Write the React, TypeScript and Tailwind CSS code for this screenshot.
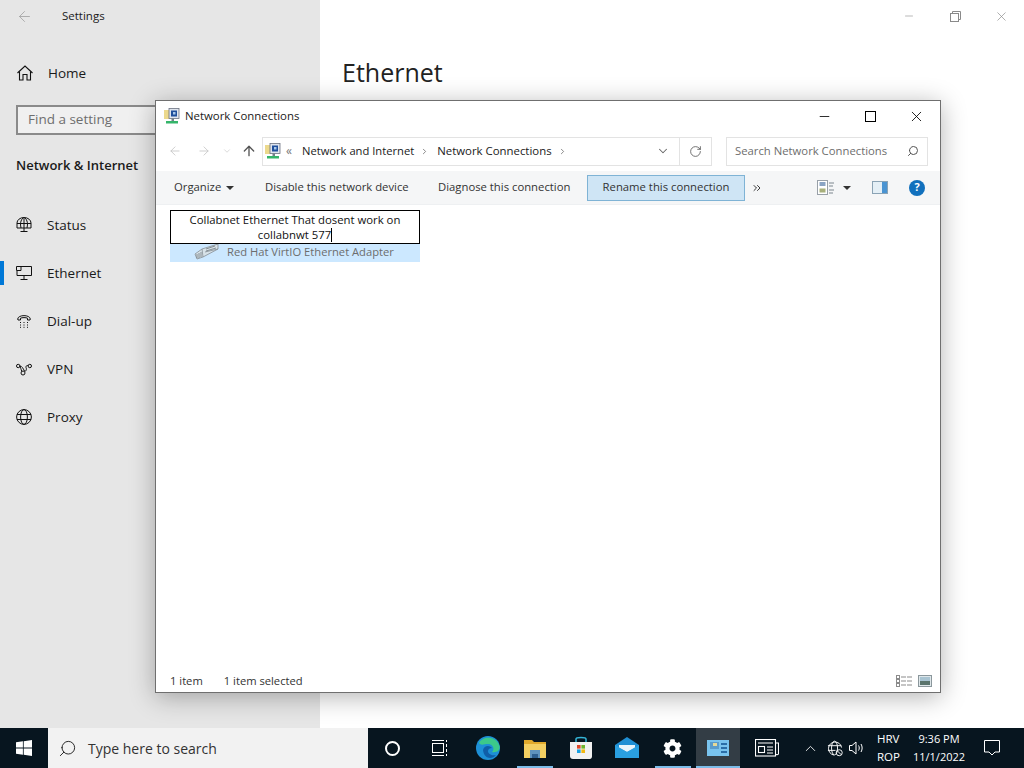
import { ArrowLeft, ArrowRight, ArrowUp, ChevronDown, ChevronRight, ChevronUp, ChevronsRight, Minus, RotateCw, Search, X } from 'lucide-react';
import { FaCog } from 'react-icons/fa';
import type { ReactNode } from 'react';

const nav = [
  { label: 'Status', icon: <StatusIcon /> },
  { label: 'Ethernet', icon: <EthernetIcon />, active: true },
  { label: 'Dial-up', icon: <DialIcon /> },
  { label: 'VPN', icon: <VpnIcon /> },
  { label: 'Proxy', icon: <GlobeIcon /> },
];

function HomeIcon() {
  return (
    <svg width="16" height="16" viewBox="0 0 16 16" fill="none" stroke="#111" strokeWidth="1.1">
      <path d="M0.5 8 L8 1 L15.5 8" />
      <path d="M2.5 6.5 V15 H6 V9.5 H10 V15 H13.5 V6.5" />
    </svg>
  );
}

function StatusIcon() {
  return (
    <svg width="16" height="16" viewBox="0 0 16 16" fill="none" stroke="#111" strokeWidth="1">
      <path d="M1 11 V6 A7 5.5 0 0 1 15 6 V11 Z" />
      <path d="M1 6.5 H15 M8 0.5 V11 M5 11 C4 7 4.5 3 7 1 M11 11 C12 7 11.5 3 9 1" />
      <path d="M8 11 V14 M4.5 14.5 H11.5" />
    </svg>
  );
}

function EthernetIcon() {
  return (
    <svg width="16" height="14" viewBox="0 0 16 14" fill="none" stroke="#111" strokeWidth="1">
      <path d="M4 .5 H15.5 V9.5 H1 V5" />
      <path d="M.5 .5 H5 V4.5 H.5 Z" />
      <path d="M8 9.5 V13 M4.5 13.5 H11.5" />
    </svg>
  );
}

function DialIcon() {
  return (
    <svg width="14" height="14" viewBox="0 0 14 14" fill="none" stroke="#111" strokeWidth="1">
      <path d="M.7 5 C1 .5 13 .5 13.3 5 L13 6 H10.5 V4.2 C9 3.4 5 3.4 3.5 4.2 V6 H1 Z" />
      <path d="M3 8.5 H4 M6.5 8.5 H7.5 M10 8.5 H11 M3 11 H4 M6.5 11 H7.5 M10 11 H11 M6.5 13.3 H7.5 M3 13.3 H4 M10 13.3 H11" />
    </svg>
  );
}

function VpnIcon() {
  return (
    <svg width="16" height="13" viewBox="0 0 16 13" fill="none" stroke="#111" strokeWidth="1">
      <circle cx="2.2" cy="3" r="1.7" />
      <circle cx="13.8" cy="3" r="1.7" />
      <circle cx="7" cy="10" r="2" />
      <path d="M3.9 3 C6 3 7 5.5 8.5 8 C10 9 11 6 10 4.5 C9.7 3 11 2 12.1 2.7 M5.8 8.5 C5 6 4.5 4.5 3.9 3" />
    </svg>
  );
}

function GlobeIcon() {
  return (
    <svg width="16" height="16" viewBox="0 0 16 16" fill="none" stroke="#111" strokeWidth="1">
      <circle cx="8" cy="8" r="7.4" />
      <ellipse cx="8" cy="8" rx="3.4" ry="7.4" />
      <path d="M1 5.5 H15 M1 10.5 H15" />
    </svg>
  );
}

function NetFolderIcon() {
  return (
    <svg width="16" height="16" viewBox="0 0 16 16">
      <rect x="0" y="2" width="6" height="9" fill="#ecd98c" />
      <rect x="5" y="0.5" width="10" height="10" fill="#dfe5ee" stroke="#6b7280" strokeWidth="0.8" />
      <rect x="7" y="2.5" width="6" height="6" fill="#1f4f9c" />
      <rect x="9" y="4" width="2.5" height="2.5" fill="#a8c8ea" />
      <rect x="7.5" y="10.5" width="2.5" height="2.5" fill="#75808a" />
      <rect x="2" y="13" width="12" height="2.5" fill="#35b56a" />
    </svg>
  );
}

function AdapterIcon() {
  return (
    <svg width="25" height="16" viewBox="0 0 25 16" fill="none">
      <path d="M1 10 L8 5 L24 0 L24 5 L9 13 L3 15 Z" fill="#d7e2e8" stroke="#858e94" strokeWidth="0.8" />
      <path d="M8 5 L9 13 M24 5 L11 8" stroke="#858e94" strokeWidth="0.8" />
      <path d="M3 10 V14 M5 9 V14 M7 8 V13 M12 5 L21 2 M12 7 L22 4" stroke="#70797f" strokeWidth="0.8" />
    </svg>
  );
}

function ViewIcon() {
  return (
    <svg width="17" height="15" viewBox="0 0 17 15">
      <rect x="0.5" y="0.5" width="10" height="14" fill="#fff" stroke="#98a0a8" />
      <rect x="2.5" y="2" width="6" height="4" fill="#8aa4c4" />
      <rect x="2.5" y="8.5" width="6" height="4" fill="#a8b07c" />
      <path d="M12 3 H17 M12 6 H16 M12 10 H17 M12 13 H16" stroke="#7d868e" />
    </svg>
  );
}

function PreviewPaneIcon() {
  return (
    <svg width="16" height="13" viewBox="0 0 16 13">
      <rect x="0.5" y="0.5" width="15" height="12" fill="#e4eff6" stroke="#8aa3b5" />
      <rect x="10" y="1" width="5" height="11" fill="#4a94d2" />
    </svg>
  );
}

function DetailsViewIcon() {
  return (
    <svg width="16" height="12" viewBox="0 0 16 12" fill="none" stroke="#8b8b8b">
      <rect x="0.5" y="0.5" width="3" height="3" />
      <rect x="0.5" y="4.5" width="3" height="3" />
      <rect x="0.5" y="8.5" width="3" height="3" />
      <path d="M5 2 H10 M11 2 H16 M5 6 H10 M11 6 H16 M5 10 H10 M11 10 H16" />
    </svg>
  );
}

function TilesViewIcon() {
  return (
    <svg width="14" height="12" viewBox="0 0 14 12">
      <rect x="0.5" y="0.5" width="13" height="11" fill="#dfe7ea" stroke="#8b979c" />
      <rect x="2" y="2" width="10" height="4" fill="#a9c4d2" />
      <rect x="2" y="6" width="10" height="4" fill="#5a746c" />
    </svg>
  );
}

function WindowsLogo() {
  return (
    <svg width="16" height="16" viewBox="0 0 16 16" fill="#fff">
      <path d="M0 2.3 L6.9 1.3 V7.5 H0 Z M7.7 1.2 L16 0 V7.5 H7.7 Z M0 8.4 H6.9 V14.7 L0 13.7 Z M7.7 8.4 H16 V16 L7.7 14.8 Z" />
    </svg>
  );
}

function TaskViewIcon() {
  return (
    <svg width="17" height="16" viewBox="0 0 17 16" fill="none" stroke="#fff" strokeWidth="1">
      <path d="M1 .5 H13 M1 15.5 H13" />
      <rect x="1.5" y="3.5" width="11" height="9" />
      <path d="M15.5 0 V2 M15.5 4 V7 M15.5 9 V12 M15.5 14 V16" />
    </svg>
  );
}

function EdgeIcon() {
  return (
    <svg width="24" height="24" viewBox="0 0 24 24">
      <circle cx="12" cy="12" r="12" fill="#1d8fd6" />
      <path d="M3 7 C6 0 20 -1 23.5 10 C24.5 15 20 17 16 16 C19 13 17 8 12 8 C8 8 5 10 3 7 Z" fill="#3cc98a" />
      <path d="M7 14 C8 9 14 9 16 12 C14 12 12 13 12 15 C12 18 16 20 20 19 C16 24 8 23 7 14 Z" fill="#0f5ea8" />
    </svg>
  );
}

function ExplorerIcon() {
  return (
    <svg width="22" height="19" viewBox="0 0 22 19">
      <path d="M0 1 H8 L10 3 H22 V8 H0 Z" fill="#e0a92c" />
      <rect x="0" y="5" width="22" height="14" fill="#f3cf62" />
      <rect x="6" y="11" width="10" height="8" fill="#5f93bd" />
      <rect x="8" y="15" width="6" height="4" fill="#2e5f8f" />
    </svg>
  );
}

function StoreIcon() {
  return (
    <svg width="24" height="24" viewBox="0 0 24 24">
      <path d="M7 6 V3 C7 1 17 1 17 3 V6" fill="none" stroke="#35b6d8" strokeWidth="1.5" />
      <path d="M1 6 H23 V20 C23 23 21 23 20 23 H4 C2 23 1 22 1 20 Z" fill="#f2f2f2" />
      <rect x="8" y="9" width="3.6" height="3.6" fill="#e0492a" />
      <rect x="12.4" y="9" width="3.6" height="3.6" fill="#6fb52c" />
      <rect x="8" y="13.4" width="3.6" height="3.6" fill="#1ba1e2" />
      <rect x="12.4" y="13.4" width="3.6" height="3.6" fill="#f2b811" />
    </svg>
  );
}

function MailIcon() {
  return (
    <svg width="24" height="22" viewBox="0 0 24 22">
      <path d="M0 8 L12 0 L24 8 V21 H0 Z" fill="#1f8fd4" />
      <path d="M4 8 H20 V11 L12 15 L4 11 Z" fill="#e8f4fb" />
      <path d="M0 8 L12 15 L24 8 V21 H0 Z" fill="#2a9fe0" />
    </svg>
  );
}

function RunningNetIcon() {
  return (
    <svg width="22" height="16" viewBox="0 0 22 16">
      <rect x="0" y="0" width="22" height="16" fill="#79c3ee" />
      <rect x="3" y="2" width="9" height="7" fill="#5a9ccc" />
      <rect x="6" y="3" width="4" height="3" fill="#e5d998" />
      <rect x="14" y="3" width="6" height="2" fill="#2a6ea8" />
      <rect x="14" y="7" width="6" height="2" fill="#2a6ea8" />
      <rect x="14" y="11" width="6" height="2" fill="#2a6ea8" />
    </svg>
  );
}

function NewsIcon() {
  return (
    <svg width="24" height="18" viewBox="0 0 24 18" fill="none" stroke="#fff" strokeWidth="1.1">
      <rect x="0.5" y="0.5" width="20" height="16.5" />
      <path d="M20.5 4 H23.5 V15 A2 2 0 0 1 20.5 15" />
      <rect x="3.5" y="7.5" width="6" height="6" />
      <path d="M3 4 H18 M12 8 H18 M12 11 H18 M12 14 H18" />
    </svg>
  );
}

function NetworkTrayIcon() {
  return (
    <svg width="17" height="17" viewBox="0 0 17 17" fill="none" stroke="#fff" strokeWidth="1">
      <path d="M7.5 15.5 A7 7 0 1 1 15.5 7.5" />
      <ellipse cx="8" cy="8" rx="3.2" ry="7.3" />
      <path d="M1 5.5 H15 M1 10.5 H9" />
      <circle cx="13" cy="13" r="3.2" />
      <path d="M11 11 L15 15" />
    </svg>
  );
}

function VolumeIcon() {
  return (
    <svg width="16" height="14" viewBox="0 0 16 14" fill="none" stroke="#fff" strokeWidth="1">
      <path d="M.5 4.5 H3 L7 1 V13 L3 9.5 H.5 Z" />
      <path d="M9.5 4.5 C10.5 6 10.5 8 9.5 9.5 M12 3 C13.5 5.5 13.5 8.5 12 11" />
    </svg>
  );
}

function NotificationIcon() {
  return (
    <svg width="16" height="16" viewBox="0 0 16 16" fill="none" stroke="#fff" strokeWidth="1">
      <path d="M.5 .5 H15.5 V12 H11 L8 15 L5 12 H.5 Z" />
    </svg>
  );
}

function RestoreIcon() {
  return (
    <svg width="11" height="11" viewBox="0 0 11 11" fill="none" stroke="#8a8a8a" strokeWidth="1">
      <rect x="0.5" y="2.5" width="8" height="8" />
      <path d="M2.5 2.5 V.5 H10.5 V8.5 H8.5" />
    </svg>
  );
}

function TaskItem({ className, bar, children }: { className: string; bar?: string; children: ReactNode }) {
  return (
    <div className={`relative h-full flex items-center justify-center ${className}`}>
      {children}
      {bar && <div className={`absolute bottom-0 h-[2px] bg-[#7cbce8] ${bar}`} />}
    </div>
  );
}

export default function App() {
  return (
    <div className="relative w-[1024px] h-[768px] overflow-hidden flex flex-col bg-white font-['Open_Sans','Noto_Sans',sans-serif] text-[#1a1a1a]">
      {/* settings window behind */}
      <div className="flex-1 flex min-h-0">
        <aside className="w-[320px] bg-[#e6e6e6] flex flex-col">
          <div className="h-[32px] flex items-center pl-[16px]">
            <ArrowLeft size={17} strokeWidth={1.2} className="text-[#a3a3a3]" />
            <span className="ml-[29px] text-[11.5px]">Settings</span>
          </div>
          <div className="h-[48px] mt-[17px] flex items-center pl-[17px]">
            <HomeIcon />
            <span className="ml-[15px] text-[13.5px]">Home</span>
          </div>
          <div className="mx-[16px] mt-[8px] h-[30px] border-2 border-[#8a8a8a] bg-[#f0f0f0] flex items-center pl-[10px] pb-[1px]">
            <span className="text-[13.5px] text-[#6e6e6e]">Find a setting</span>
          </div>
          <div className="mt-[18px] pl-[16px] text-[13px] font-semibold leading-[24px]">Network &amp; Internet</div>
          <div className="mt-[24px] flex flex-col">
            {nav.map((item) => (
              <div key={item.label} className="relative h-[48px] flex items-center">
                {item.active && <div className="absolute left-0 top-[12px] w-[4px] h-[24px] bg-[#0078d7]" />}
                <div className="w-[47px] flex justify-center">{item.icon}</div>
                <span className="text-[13.5px]">{item.label}</span>
              </div>
            ))}
          </div>
        </aside>
        <main className="flex-1 flex flex-col">
          <div className="h-[32px] flex items-center justify-end text-[#8a8a8a]">
            <div className="w-[46px] flex justify-center"><Minus size={12} strokeWidth={1.2} /></div>
            <div className="w-[46px] flex justify-center"><RestoreIcon /></div>
            <div className="w-[46px] flex justify-center"><X size={15} strokeWidth={1.1} /></div>
          </div>
          <h1 className="ml-[22px] mt-[18px] text-[25px] leading-[44px] font-normal text-[#222]">Ethernet</h1>
        </main>
      </div>

      {/* network connections window */}
      <div className="absolute left-[155px] top-[100px] w-[786px] h-[593px] bg-white border border-[#6f6f6f] shadow-[0_4px_24px_rgba(0,0,0,0.3)] flex flex-col">
        <div className="h-[30px] shrink-0 flex items-center pl-[8px]">
          <NetFolderIcon />
          <span className="ml-[5px] text-[11.4px] flex-1">Network Connections</span>
          <div className="w-[46px] flex justify-center"><Minus size={15} strokeWidth={1.3} className="text-black" /></div>
          <div className="w-[46px] flex justify-center"><div className="w-[11px] h-[11px] border border-black" /></div>
          <div className="w-[46px] flex justify-center mr-[1px]"><X size={17} strokeWidth={1.2} className="text-black" /></div>
        </div>
        <div className="h-[40px] shrink-0 flex items-center">
          <div className="w-[106px] flex items-center pl-[12px] text-[#c4c4c4]">
            <ArrowLeft size={14} strokeWidth={1.4} />
            <ArrowRight size={14} strokeWidth={1.4} className="ml-[15px]" />
            <ChevronDown size={10} strokeWidth={1.5} className="ml-[11px]" />
            <ArrowUp size={16} strokeWidth={2} className="ml-[9px] text-[#555]" />
          </div>
          <div className="w-[450px] h-[29px] border border-[#e3e3e3] flex items-center">
            <div className="ml-[2px]"><NetFolderIcon /></div>
            <span className="ml-[5px] text-[12px] text-[#777] leading-none">«</span>
            <span className="ml-[10px] text-[11.2px]">Network and Internet</span>
            <ChevronRight size={9} strokeWidth={2} className="ml-[6px] text-[#666]" />
            <span className="ml-[8px] text-[11.4px]">Network Connections</span>
            <ChevronRight size={9} strokeWidth={2} className="ml-[6px] text-[#666]" />
            <div className="flex-1" />
            <ChevronDown size={14} strokeWidth={1.8} className="text-[#666] mr-[9px]" />
            <div className="w-[32px] h-full border-l border-[#e3e3e3] flex items-center justify-center">
              <RotateCw size={13} strokeWidth={1.5} className="text-[#555]" />
            </div>
          </div>
          <div className="ml-[14px] w-[202px] h-[29px] border border-[#e3e3e3] flex items-center pl-[8px] pr-[8px]">
            <span className="text-[11.3px] text-[#6d6d6d] flex-1">Search Network Connections</span>
            <Search size={12} strokeWidth={2} className="text-[#555] -scale-x-100" />
          </div>
        </div>
        <div className="h-[34px] shrink-0 bg-[#f5f6f7] flex items-center text-[11.3px] text-[#333] border-b border-[#eef0f2]">
          <span className="ml-[18px] w-[52px]">Organize</span>
          <div className="w-0 h-0 border-x-[4px] border-x-transparent border-t-[4px] border-t-[#333]" />
          <span className="ml-[31px] w-[173px]">Disable this network device</span>
          <span className="w-[149px]">Diagnose this connection</span>
          <div className="w-[158px] h-[26px] bg-[#cfe5f5] border border-[#7fb3d5] flex items-center justify-center">Rename this connection</div>
          <ChevronsRight size={12} strokeWidth={1.8} className="ml-[6px] text-[#222]" />
          <div className="ml-[54px]"><ViewIcon /></div>
          <div className="ml-[9px] w-0 h-0 border-x-[4px] border-x-transparent border-t-[4px] border-t-[#333]" />
          <div className="ml-[21px]"><PreviewPaneIcon /></div>
          <div className="ml-[21px] w-[16px] h-[16px] rounded-full bg-[#1170bd] text-white text-[11px] font-bold flex items-center justify-center">?</div>
        </div>
        <div className="flex-1 pl-[14px] pt-[5px] flex flex-col">
          <div className="relative z-10 w-[250px] h-[34px] border border-black bg-white flex flex-col items-center justify-center text-[11.35px] leading-[15px] text-[#111]">
            <span>Collabnet Ethernet That dosent work on</span>
            <span className="flex items-center">collabnwt 577<span className="w-px h-[14px] bg-black" /></span>
          </div>
          <div className="w-[250px] h-[18px] bg-[#cce8ff] flex items-center pl-[24px]">
            <div className="-mt-[3px]"><AdapterIcon /></div>
            <span className="ml-[8px] text-[11.2px] pb-[2px] text-[#6d6d6d]">Red Hat VirtIO Ethernet Adapter</span>
          </div>
        </div>
        <div className="h-[22px] shrink-0 flex items-center pl-[14px] pr-[8px] text-[11.2px] text-[#333]">
          <span>1 item</span>
          <span className="ml-[21px] flex-1">1 item selected</span>
          <DetailsViewIcon />
          <div className="ml-[6px]"><TilesViewIcon /></div>
        </div>
      </div>

      {/* taskbar */}
      <footer className="h-[40px] shrink-0 bg-[#07151f] flex items-center text-white">
        <div className="w-[48px] flex justify-center"><WindowsLogo /></div>
        <div className="w-[320px] h-full bg-[#f2f2f2] flex items-center pl-[10px]">
          <Search size={19} strokeWidth={1.2} className="text-[#222] -scale-x-100" />
          <span className="ml-[11px] text-[14px] text-[#333]">Type here to search</span>
        </div>
        <div className="w-[48px] flex justify-center">
          <div className="w-[15px] h-[15px] rounded-full border-2 border-white" />
        </div>
        <div className="w-[46px] flex justify-center"><TaskViewIcon /></div>
        <div className="w-[52px] flex justify-center"><EdgeIcon /></div>
        <TaskItem className="w-[42px]" bar="left-[3px] right-[3px]"><ExplorerIcon /></TaskItem>
        <TaskItem className="w-[50px]"><StoreIcon /></TaskItem>
        <TaskItem className="w-[42px]"><MailIcon /></TaskItem>
        <TaskItem className="w-[48px]" bar="left-[7px] right-[5px]"><FaCog size={19} className="text-white" /></TaskItem>
        <TaskItem className="w-[44px] bg-[#333d45]" bar="left-0 right-0"><RunningNetIcon /></TaskItem>
        <div className="w-[54px] flex justify-center"><NewsIcon /></div>
        <div className="w-[33px] flex justify-center"><ChevronUp size={17} strokeWidth={1.2} /></div>
        <div className="w-[16px] flex justify-center"><NetworkTrayIcon /></div>
        <div className="w-[28px] flex justify-center"><VolumeIcon /></div>
        <div className="ml-[6px] w-[36px] flex flex-col text-[11.5px] leading-[18px]">
          <span>HRV</span>
          <span>ROP</span>
        </div>
        <div className="w-[52px] flex flex-col items-center text-[11px] leading-[18px] whitespace-nowrap">
          <span>9:36 PM</span>
          <span>11/1/2022</span>
        </div>
        <div className="flex-1 flex justify-center pr-[6px]"><NotificationIcon /></div>
      </footer>
    </div>
  );
}
